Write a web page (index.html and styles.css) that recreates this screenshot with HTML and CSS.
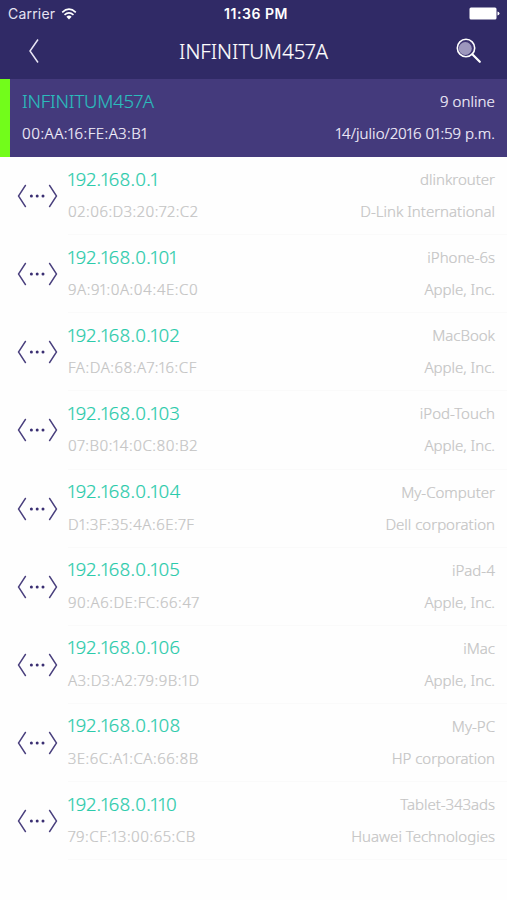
FILE: index.html
```html
<!DOCTYPE html>
<html lang="es">
<head>
<meta charset="utf-8">
<title>INFINITUM457A</title>
<link rel="stylesheet" href="styles.css">
</head>
<body>
<svg class="defs" width="0" height="0" aria-hidden="true">
  <symbol id="node" viewBox="0 0 40 24">
    <path d="M8.200 1 1 12l7.200 11M31.800 1 39 12l-7.200 11" fill="none" stroke="#493f7d" stroke-width="1.400"/>
    <g fill="#3a2f72"><circle cx="13.900" cy="12" r="1.500"/><circle cx="19.700" cy="12" r="1.500"/><circle cx="25.500" cy="12" r="1.500"/></g>
  </symbol>
</svg>
<header class="top">
  <div class="status">
    <div class="carrier"><span>Carrier</span>
      <svg width="16" height="12" viewBox="0 0 15 12" fill="none" stroke="#fff" stroke-width="1.600"><path d="M.7 4.300Q7.500-1.900 14.300 4.300M3 6.900q4.500-4 9 0"/><path d="M4.900 8.700q2.600-2.200 5.200 0L7.500 11.500z" fill="#fff" stroke="none"/></svg>
    </div>
    <div class="clock">11:36 PM</div>
    <svg class="battery" width="31" height="13" viewBox="0 0 31 13" fill="#fff"><rect x=".5" y=".5" width="27" height="12" rx="1.500"/><path d="M28.500 4.500q2 .3 2 2t-2 2z"/></svg>
  </div>
  <nav class="bar">
    <svg class="back" width="12" height="26" viewBox="0 0 12 26" fill="none" stroke="#e9e6f5" stroke-width="1.500"><path d="M10 1.500 2 13l8 11.500"/></svg>
    <h1>INFINITUM457A</h1>
    <svg class="search" width="26" height="26" viewBox="0 0 26 26"><circle cx="10" cy="10" r="8.700" fill="#3b3270" stroke="#fff" stroke-width="1.600"/><circle cx="9.300" cy="10.500" r="6.500" fill="#9d97bd"/><path d="m16.300 16.300 7.500 7.500" stroke="#fff" stroke-width="2.200" stroke-linecap="round"/></svg>
  </nav>
</header>
<section class="summary">
  <div class="line"><span class="name">INFINITUM457A</span><span class="online">9 online</span></div>
  <div class="line"><span class="mac">00:AA:16:FE:A3:B1</span><span class="date">14/julio/2016 01:59 p.m.</span></div>
</section>
<main class="list">
  <article class="row"><svg class="node"><use href="#node"/></svg><div class="info"><div class="line"><span class="ip">192.168.0.1</span><span class="host">dlinkrouter</span></div><div class="line"><span class="mac">02:06:D3:20:72:C2</span><span class="vendor">D-Link International</span></div></div></article>
  <article class="row"><svg class="node"><use href="#node"/></svg><div class="info"><div class="line"><span class="ip">192.168.0.101</span><span class="host">iPhone-6s</span></div><div class="line"><span class="mac">9A:91:0A:04:4E:C0</span><span class="vendor">Apple, Inc.</span></div></div></article>
  <article class="row"><svg class="node"><use href="#node"/></svg><div class="info"><div class="line"><span class="ip">192.168.0.102</span><span class="host">MacBook</span></div><div class="line"><span class="mac">FA:DA:68:A7:16:CF</span><span class="vendor">Apple, Inc.</span></div></div></article>
  <article class="row"><svg class="node"><use href="#node"/></svg><div class="info"><div class="line"><span class="ip">192.168.0.103</span><span class="host">iPod-Touch</span></div><div class="line"><span class="mac">07:B0:14:0C:80:B2</span><span class="vendor">Apple, Inc.</span></div></div></article>
  <article class="row"><svg class="node"><use href="#node"/></svg><div class="info"><div class="line"><span class="ip">192.168.0.104</span><span class="host">My-Computer</span></div><div class="line"><span class="mac">D1:3F:35:4A:6E:7F</span><span class="vendor">Dell corporation</span></div></div></article>
  <article class="row"><svg class="node"><use href="#node"/></svg><div class="info"><div class="line"><span class="ip">192.168.0.105</span><span class="host">iPad-4</span></div><div class="line"><span class="mac">90:A6:DE:FC:66:47</span><span class="vendor">Apple, Inc.</span></div></div></article>
  <article class="row"><svg class="node"><use href="#node"/></svg><div class="info"><div class="line"><span class="ip">192.168.0.106</span><span class="host">iMac</span></div><div class="line"><span class="mac">A3:D3:A2:79:9B:1D</span><span class="vendor">Apple, Inc.</span></div></div></article>
  <article class="row"><svg class="node"><use href="#node"/></svg><div class="info"><div class="line"><span class="ip">192.168.0.108</span><span class="host">My-PC</span></div><div class="line"><span class="mac">3E:6C:A1:CA:66:8B</span><span class="vendor">HP corporation</span></div></div></article>
  <article class="row"><svg class="node"><use href="#node"/></svg><div class="info"><div class="line"><span class="ip">192.168.0.110</span><span class="host">Tablet-343ads</span></div><div class="line"><span class="mac">79:CF:13:00:65:CB</span><span class="vendor">Huawei Technologies</span></div></div></article>
</main>
</body>
</html>
```
FILE: styles.css
```css
* { box-sizing: border-box; }

body {
  margin: 0;
  height: 900px;
  overflow: hidden;
  background: #fefefe;
  font-family: "Noto Sans", "Open Sans", sans-serif;
  font-size: 15px;
  font-weight: 300;
  font-feature-settings: "pnum";
  white-space: nowrap;
  -webkit-text-stroke: .2px currentColor;
}

.defs { display: none; }
svg { display: block; flex: none; }

.top {
  height: 79px;
  background: #302a66;
  color: #fff;
}

.status {
  display: grid;
  grid-template-columns: 1fr auto 1fr;
  align-items: center;
  height: 27px;
  padding: 0 7px 0 8px;
  font-family: Inter, sans-serif;
  font-size: 14px;
  font-weight: 400;
  -webkit-text-stroke: 0;
}

.carrier { display: flex; align-items: center; gap: 6px; color: #e6e3f2; letter-spacing: .2px; }
.clock { font-size: 14px; font-weight: 600; letter-spacing: .55px; padding-left: 4px; }
.battery { justify-self: end; }

.bar {
  display: grid;
  grid-template-columns: 60px 1fr 60px;
  align-items: center;
  height: 48px;
}

.back { margin-left: 28px; }
.search { margin-left: 9px; }

h1 {
  margin: 0;
  text-align: center;
  font-size: 20.5px;
  font-weight: 300;
}

.summary {
  height: 78px;
  padding: 6px 12px 0;
  border-left: 10px solid #72fc1b;
  background: #443a7c;
  color: #f4f1fc;
}

.line {
  display: flex;
  justify-content: space-between;
  align-items: center;
  height: 32px;
}

.name { margin-top: -2px; color: #2bbcbc; font-size: 18.5px; letter-spacing: -.2px; }
.online, .date { letter-spacing: .08px; }
.summary .mac { letter-spacing: .5px; }

.row {
  display: flex;
  align-items: center;
  height: 78.15px;
  padding: 0 12px 0 17px;
}

.node { width: 41px; height: 24px; }

.info {
  flex: 1;
  height: 100%;
  margin-left: 10px;
  margin-right: -12px;
  padding: 6px 12px 0 0;
  border-bottom: 1px solid #fafafa;
  color: #c4c4c4;
}

.info .mac { letter-spacing: .55px; }
.ip { margin-top: -2px; color: #2bcbab; font-size: 18.5px; letter-spacing: .2px; }
```
